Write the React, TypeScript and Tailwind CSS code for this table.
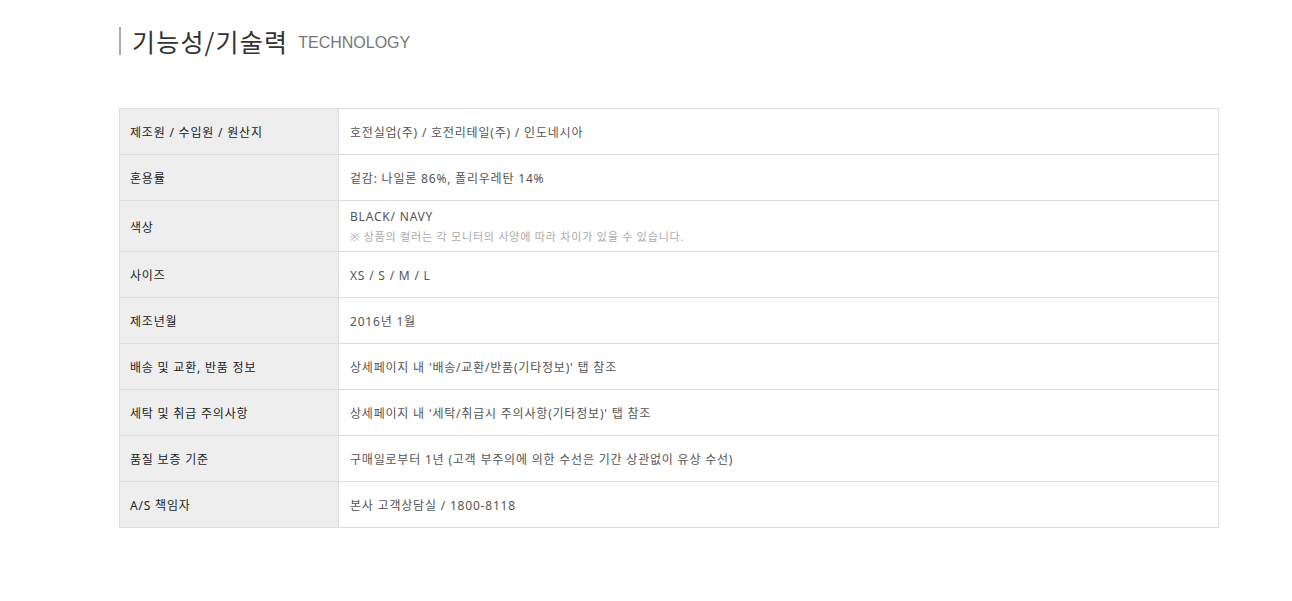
import React from "react";

const rows: { label: string; value: React.ReactNode; tall?: boolean }[] = [
  { label: "제조원 / 수입원 / 원산지", value: "호전실업(주) / 호전리테일(주) / 인도네시아" },
  { label: "혼용률", value: "겉감: 나일론 86%, 폴리우레탄 14%" },
  {
    label: "색상",
    tall: true,
    value: (
      <div className="flex flex-col -mt-[3px]">
        <span>BLACK/ NAVY</span>
        <span className="text-[11px] text-[#aaaaaa] leading-[16px] mt-[3px]">
          ※ 상품의 컬러는 각 모니터의 사양에 따라 차이가 있을 수 있습니다.
        </span>
      </div>
    ),
  },
  { label: "사이즈", value: "XS / S / M / L" },
  { label: "제조년월", value: "2016년 1월" },
  { label: "배송 및 교환, 반품 정보", value: "상세페이지 내 '배송/교환/반품(기타정보)' 탭 참조" },
  { label: "세탁 및 취급 주의사항", value: "상세페이지 내 '세탁/취급시 주의사항(기타정보)' 탭 참조" },
  { label: "품질 보증 기준", value: "구매일로부터 1년 (고객 부주의에 의한 수선은 기간 상관없이 유상 수선)" },
  { label: "A/S 책임자", value: "본사 고객상담실 / 1800-8118" },
];

export default function App() {
  return (
    <div
      className="w-[1292px] h-[601px] bg-white pl-[119px] pt-[27px]"
      style={{ fontFamily: '"Noto Sans", "Noto Sans CJK KR", sans-serif' }}
    >
      <div className="flex items-center h-[28px] border-l-2 border-[#aaaaaa] pl-[11px]">
        <span
          className="text-[25px] leading-[28px] text-[#333333] tracking-[1.2px]"
          style={{ fontFamily: '"Noto Sans CJK KR", sans-serif' }}
        >
          기능성/기술력
        </span>
        <span
          className="ml-[10px] mt-[3px] text-[16px] text-[#777777]"
          style={{ fontFamily: '"Liberation Sans", Arial, sans-serif' }}
        >
          TECHNOLOGY
        </span>
      </div>
      <div className="mt-[53px] w-[1100px] border-t border-l border-r border-[#dddddd] text-[12px] tracking-[0.8px]">
        {rows.map((r, i) => (
          <div key={i} className={`flex border-b border-[#dddddd] ${r.tall ? "h-[51px]" : "h-[46px]"}`}>
            <div className="w-[219px] shrink-0 bg-[#eeeeee] border-r border-[#dddddd] flex items-center pl-[10px] pt-[3px] text-[#222222]">
              {r.label}
            </div>
            <div className="flex-1 flex items-center pl-[11px] pt-[3px] text-[#555555]">{r.value}</div>
          </div>
        ))}
      </div>
    </div>
  );
}
